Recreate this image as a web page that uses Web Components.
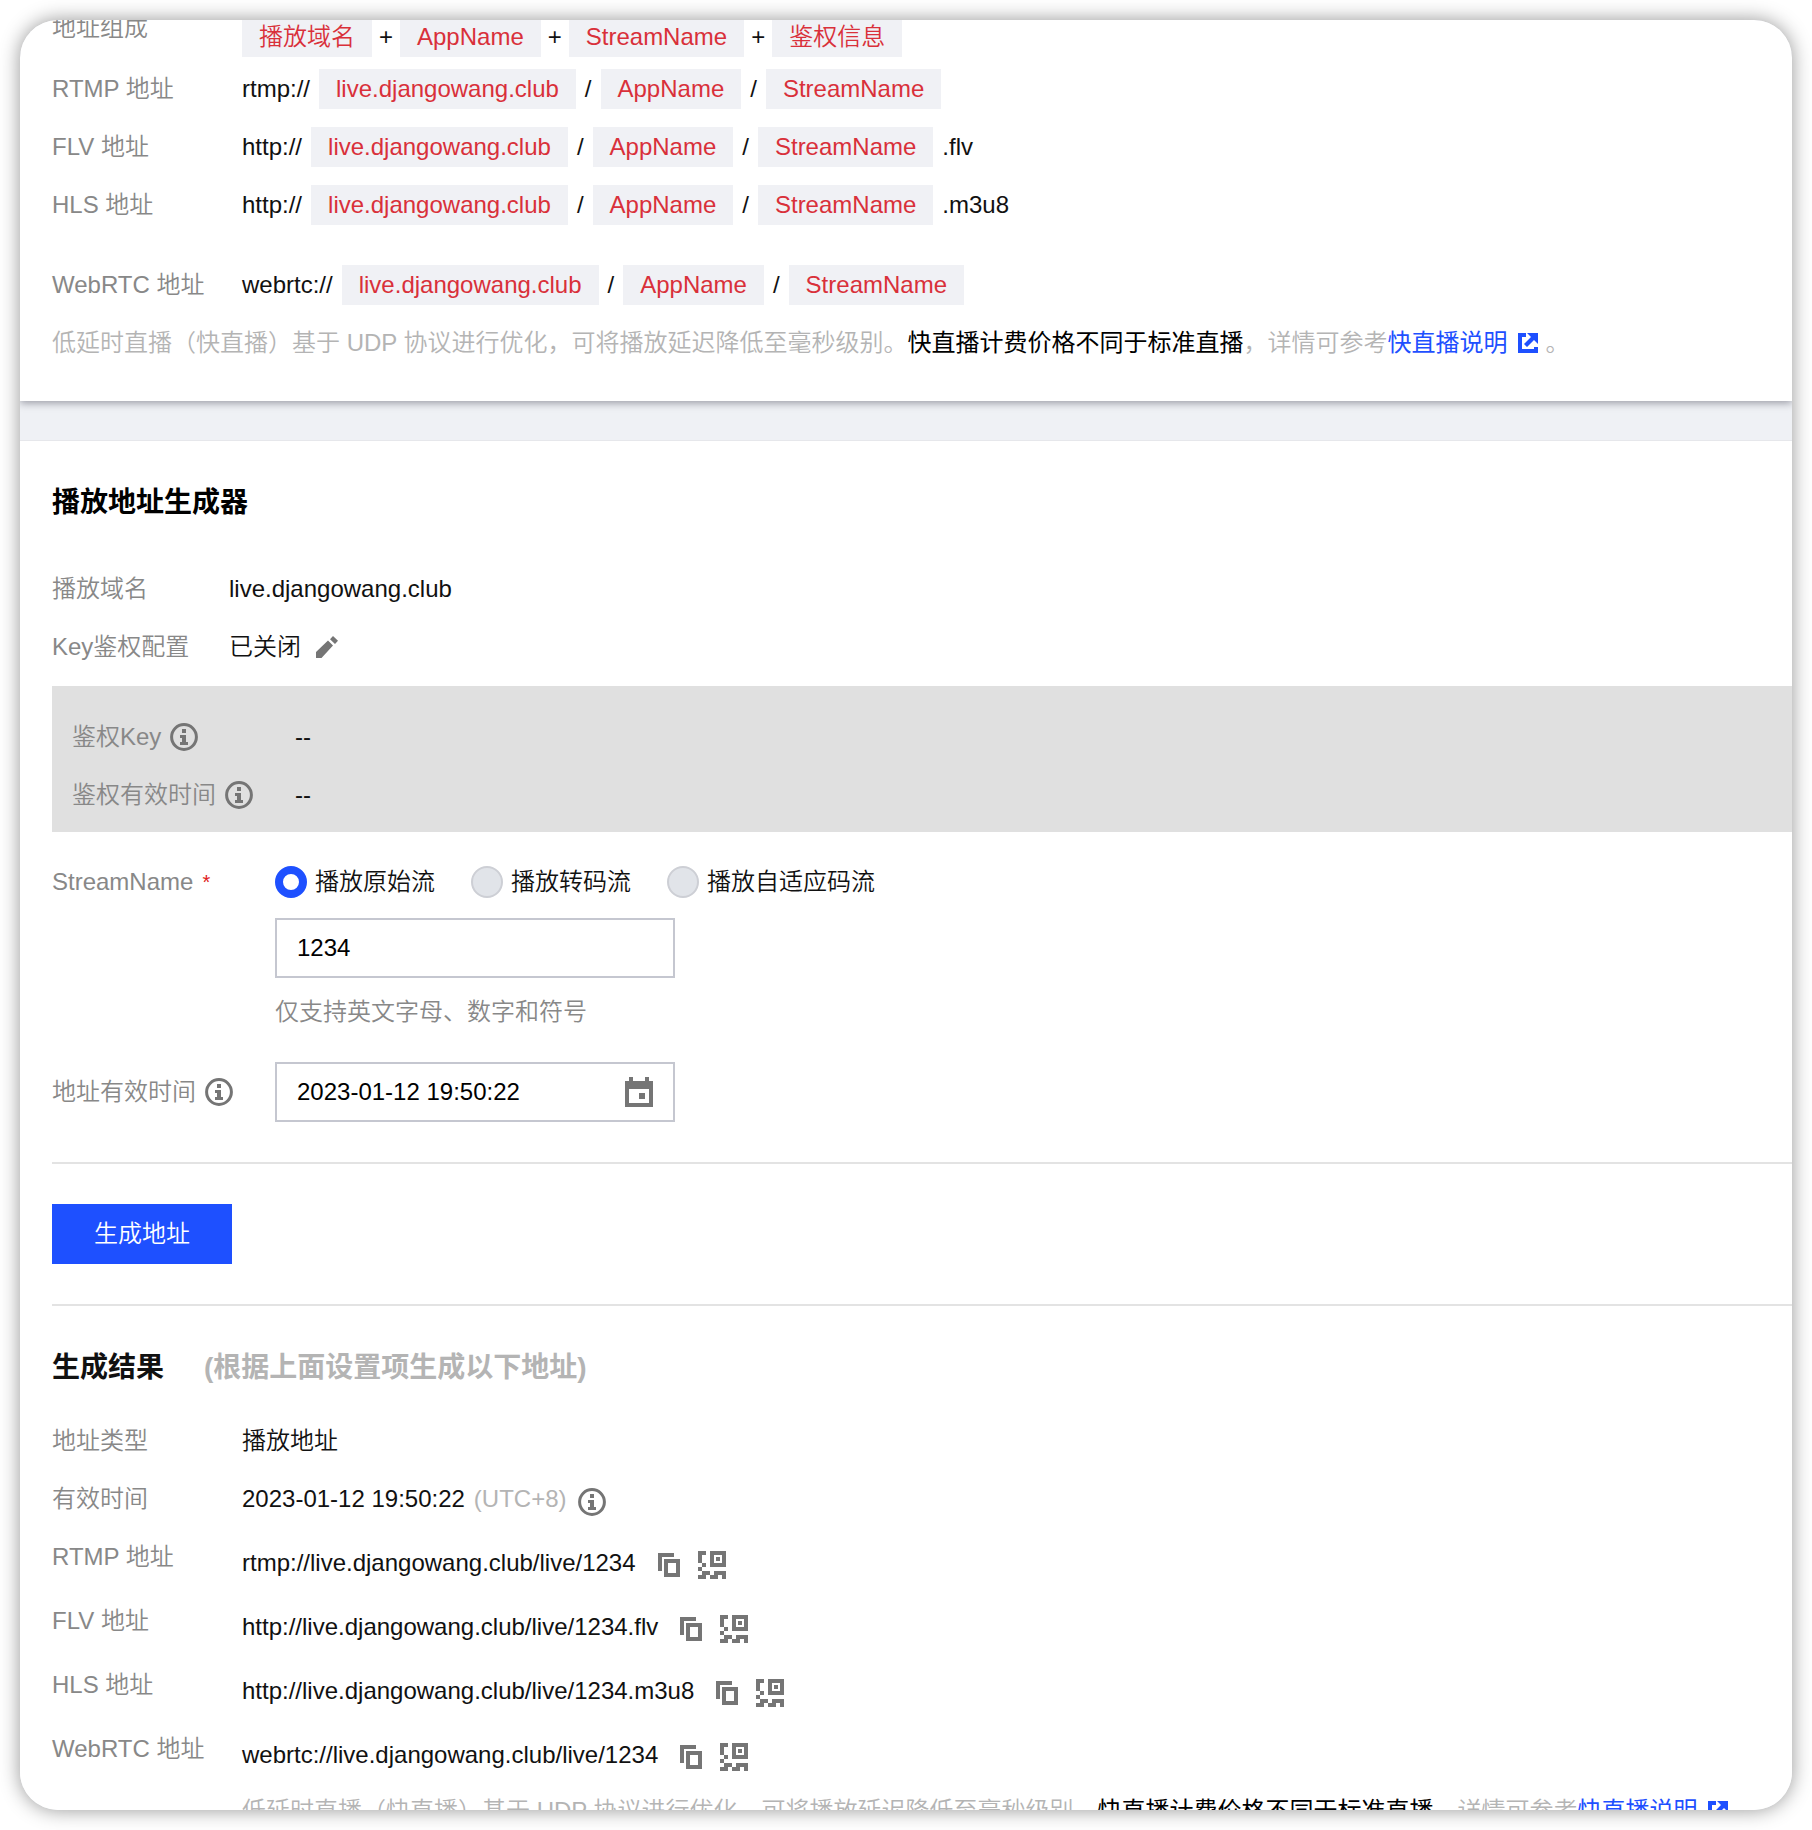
<!DOCTYPE html>
<html lang="zh-CN">
<head>
<meta charset="utf-8">
<title>播放地址生成器</title>
<style>
    :root {
        --ui-color-text: #111;
        --ui-color-label: #888;
        --ui-color-weak: #b4b4b4;
        --ui-color-brand: #1e50ff;
        --ui-color-danger: #d9303a;
        --ui-color-border: #c5c7d0;
        --ui-color-line: #e3e3e3;
        --ui-color-icon: #757575;
        --ui-font: "Liberation Sans", "Noto Sans CJK SC", sans-serif;
    }

    body {
        margin: 0;
        background: #fff;
        color: var(--ui-color-text);
        font: 350 24px/40px var(--ui-font);
    }

    .tag-list { --label-width: 190px; }
    .result { --label-width: 190px; }
    .generator { --label-width: 177px; }
    .auth-box { --label-width: 223px; }

    .first { margin-top: -12px; }
    .tight { margin-top: 12px; }
    .apart { margin-top: 40px; }
    .weak { color: var(--ui-color-weak); }
</style>
</head>
<body>

<app-window>
    <page-panel raised class="tag-list">
        <field-row class="first" label="地址组成" offset dense>
            <url-chip>播放域名</url-chip><span>+</span><url-chip>AppName</url-chip><span>+</span><url-chip>StreamName</url-chip><span>+</span><url-chip>鉴权信息</url-chip>
        </field-row>
        <field-row class="tight" label="RTMP 地址">
            <span>rtmp://</span><url-chip>live.djangowang.club</url-chip><span>/</span><url-chip>AppName</url-chip><span>/</span><url-chip>StreamName</url-chip>
        </field-row>
        <field-row label="FLV 地址">
            <span>http://</span><url-chip>live.djangowang.club</url-chip><span>/</span><url-chip>AppName</url-chip><span>/</span><url-chip>StreamName</url-chip><span>.flv</span>
        </field-row>
        <field-row label="HLS 地址">
            <span>http://</span><url-chip>live.djangowang.club</url-chip><span>/</span><url-chip>AppName</url-chip><span>/</span><url-chip>StreamName</url-chip><span>.m3u8</span>
        </field-row>
        <field-row class="apart" label="WebRTC 地址">
            <span>webrtc://</span><url-chip>live.djangowang.club</url-chip><span>/</span><url-chip>AppName</url-chip><span>/</span><url-chip>StreamName</url-chip>
        </field-row>
        <live-note></live-note>
    </page-panel>

    <page-panel class="generator">
        <panel-title>播放地址生成器</panel-title>
        <field-row label="播放域名"><span>live.djangowang.club</span></field-row>
        <field-row label="Key鉴权配置"><span>已关闭</span><icon-button icon="pencil" label="编辑"></icon-button></field-row>
        <auth-box class="auth-box">
            <field-row label="鉴权Key" info><span>--</span></field-row>
            <field-row label="鉴权有效时间" info><span>--</span></field-row>
        </auth-box>
        <stream-field></stream-field>
        <time-field></time-field>
        <action-bar>生成地址</action-bar>
        <div class="result">
            <panel-title small>生成结果<span slot="note">(根据上面设置项生成以下地址)</span></panel-title>
            <field-row label="地址类型"><span>播放地址</span></field-row>
            <field-row label="有效时间"><span>2023-01-12 19:50:22</span><span class="weak">(UTC+8)</span><svg-icon name="info" low></svg-icon></field-row>
            <result-row label="RTMP 地址">rtmp://live.djangowang.club/live/1234</result-row>
            <result-row label="FLV 地址">http://live.djangowang.club/live/1234.flv</result-row>
            <result-row label="HLS 地址">http://live.djangowang.club/live/1234.m3u8</result-row>
            <result-row label="WebRTC 地址">webrtc://live.djangowang.club/live/1234</result-row>
            <live-note indent></live-note>
        </div>
    </page-panel>
</app-window>

<script>
const icons = {
    info: [28, 28, '<circle cx="14" cy="14" r="12.4" fill="none" stroke="currentColor" stroke-width="3"/><path d="M12 6h4v4h-4zM10 12h6v7h2v3h-8v-3h2v-4h-2z"/>'],
    pencil: [22, 22, '<path d="M0 22v-6L12 4.500l5 5L5.500 22zM17 0l5 4.700-3 3.300-5-4.700z"/>'],
    calendar: [28, 30, '<path fill-rule="evenodd" d="M4 0h4v4h12V0h4v4h4v26H0V4h4zM4 12v14h20V12z"/><path d="M14 16h6v6h-6z"/>'],
    copy: [22, 24, '<path d="M0 0h16v4H4v14H0z"/><path fill-rule="evenodd" d="M6 6h16v18H6zM10 10v10h8V10z"/>'],
    qrcode: [28, 28, '<path d="M0 0h8v4H4v8H0zM4 12h4v4H4zM0 16h4v4H0z"/><path fill-rule="evenodd" d="M12 0h16v16H12zM16 4v8h8V4z"/><path d="M18 6h4v4h-4zM4 20h8v4H8v4H0v-4h4zM16 20h12v8h-4v-4h-4v4h-8v-4h4z"/>'],
    external: [20, 20, '<path d="M0 0h8v4H4v12h12v-2h4v6H0z"/><path d="M9 0h11v11l-4-4-7 7-3-3 7-7z"/>']
};

// every element clones one template into an open root
function render(el, html) {
    const template = document.createElement('template');
    template.innerHTML = html;
    el.attachShadow({ mode: 'open' });
    el.shadowRoot.appendChild(template.content.cloneNode(true));
}

const rowStyle = `
    :host { display: block; margin-top: 18px; }
    .row { display: flex; align-items: flex-start; }
    .label {
        display: flex;
        align-items: center;
        gap: 9px;
        flex: none;
        width: var(--label-width);
        color: var(--ui-color-label);
        white-space: nowrap;
    }
`;

const inputStyle = `
    input[type=text] {
        box-sizing: border-box;
        width: 400px;
        height: 60px;
        padding: 0 20px;
        border: 2px solid var(--ui-color-border);
        border-radius: 0;
        background: #fff;
        color: #000;
        font: inherit;
        outline: none;
    }
`;

class SvgIcon extends HTMLElement {
    constructor() {
        super();
        const [w, h, body] = icons[this.getAttribute('name')];
        render(this, `
        <style>
            :host { display: inline-flex; flex: none; color: var(--ui-color-icon); }
            :host([low]) { margin-top: 6px; margin-left: 2px; }
            :host([name=external]) { color: inherit; }
        </style>
        <svg width="${w}" height="${h}" viewBox="0 0 ${w} ${h}" fill="currentColor" aria-hidden="true">${body}</svg>
        `);
    }
}
window.customElements.define('svg-icon', SvgIcon);

class IconButton extends HTMLElement {
    constructor() {
        super();
        render(this, `
        <style>
            :host { display: inline-flex; flex: none; margin-left: 6px; }
            button { display: flex; padding: 0; border: 0; background: none; cursor: pointer; }
        </style>
        <button type="button" aria-label="${this.getAttribute('label')}"><svg-icon name="${this.getAttribute('icon')}"></svg-icon></button>
        `);
    }
}
window.customElements.define('icon-button', IconButton);

class AppWindow extends HTMLElement {
    constructor() {
        super();
        render(this, `
        <style>
            :host { display: block; box-sizing: border-box; height: 100vh; padding: 20px; overflow: hidden; }
            .frame {
                height: 100%;
                overflow: hidden;
                border-radius: 38px;
                background: #eff1f5;
                box-shadow: 0 0 20px rgba(0, 0, 0, .42);
            }
        </style>
        <div class="frame"><slot></slot></div>
        `);
    }
}
window.customElements.define('app-window', AppWindow);

class PagePanel extends HTMLElement {
    constructor() {
        super();
        render(this, `
        <style>
            :host { display: flow-root; padding: 42px 0 0 32px; border-top: 1px solid #e6e7eb; background: #fff; }
            :host([raised]) {
                margin-bottom: 39px;
                padding: 0 0 38px 32px;
                border: 0;
                box-shadow: 0 2px 8px rgba(20, 20, 40, .4);
            }
        </style>
        <slot></slot>
        `);
    }
}
window.customElements.define('page-panel', PagePanel);

class PanelTitle extends HTMLElement {
    constructor() {
        super();
        render(this, `
        <style>
            :host { display: block; margin-bottom: 46px; color: #000; }
            :host([small]) { margin-bottom: 33px; color: var(--ui-color-text); }
            h2 { display: flex; gap: 40px; margin: 0; font-size: 28px; font-weight: bold; }
            ::slotted(span) { color: var(--ui-color-weak); }
        </style>
        <h2><span><slot></slot></span><slot name="note"></slot></h2>
        `);
    }
}
window.customElements.define('panel-title', PanelTitle);

class FieldRow extends HTMLElement {
    constructor() {
        super();
        const info = this.hasAttribute('info') ? '<svg-icon name="info"></svg-icon>' : '';
        render(this, `
        <style>
            ${rowStyle}
            .value { display: flex; align-items: center; gap: 9px; min-height: 40px; white-space: nowrap; }
            :host([dense]) .value { gap: 7px; }
            :host([offset]) .value { margin-top: 9px; }
        </style>
        <div class="row">
            <span class="label">${this.getAttribute('label')}${info}</span>
            <div class="value"><slot></slot></div>
        </div>
        `);
    }
}
window.customElements.define('field-row', FieldRow);

class UrlChip extends HTMLElement {
    constructor() {
        super();
        render(this, `
        <style>
            :host { display: block; padding: 0 17px; background: #f0f1f5; color: var(--ui-color-danger); }
        </style>
        <slot></slot>
        `);
    }
}
window.customElements.define('url-chip', UrlChip);

class LiveNote extends HTMLElement {
    constructor() {
        super();
        render(this, `
        <style>
            :host { display: block; margin-top: 18px; color: var(--ui-color-weak); white-space: nowrap; }
            :host([indent]) { margin-top: 16px; margin-left: var(--label-width); }
            p { margin: 0; }
            em { color: #000; font-style: normal; font-weight: 400; }
            a { color: var(--ui-color-brand); font-weight: 400; text-decoration: none; }
            svg-icon { margin: 0 8px 0 10px; vertical-align: -2px; }
        </style>
        <p>低延时直播（快直播）基于 UDP 协议进行优化，可将播放延迟降低至毫秒级别。<em>快直播计费价格不同于标准直播</em>，详情可参考<a href="#">快直播说明<svg-icon name="external"></svg-icon></a>。</p>
        `);
    }
}
window.customElements.define('live-note', LiveNote);

class AuthBox extends HTMLElement {
    constructor() {
        super();
        render(this, `
        <style>
            :host { display: flow-root; margin-top: 19px; padding: 13px 0 17px 20px; background: #e0e0e0; }
        </style>
        <slot></slot>
        `);
    }
}
window.customElements.define('auth-box', AuthBox);

class StreamField extends HTMLElement {
    constructor() {
        super();
        const radios = ['播放原始流', '播放转码流', '播放自适应码流'].map((text, i) => `
            <label><input type="radio" name="stream" ${i === 0 ? 'checked' : ''}>${text}</label>`).join('');
        render(this, `
        <style>
            ${rowStyle}
            ${inputStyle}
            :host { --label-width: 223px; margin-top: 30px; }
            .star { color: #e02020; font-size: 20px; }
            .radios { display: flex; gap: 36px; margin-bottom: 16px; }
            .radios label { display: flex; align-items: center; gap: 8px; }
            input[type=radio] {
                appearance: none;
                box-sizing: border-box;
                width: 32px;
                height: 32px;
                margin: 0;
                border: 2px solid #cdcfd5;
                border-radius: 50%;
                background: #e1e4e9;
            }
            input[type=radio]:checked { border: 8px solid var(--ui-color-brand); background: #fff; }
            input[type=text] { display: block; }
            .hint { margin: 14px 0 0; color: var(--ui-color-label); }
        </style>
        <div class="row">
            <label class="label" for="stream">StreamName<span class="star">*</span></label>
            <div>
                <div class="radios">${radios}</div>
                <input type="text" id="stream" value="1234">
                <p class="hint">仅支持英文字母、数字和符号</p>
            </div>
        </div>
        `);
    }
}
window.customElements.define('stream-field', StreamField);

class TimeField extends HTMLElement {
    constructor() {
        super();
        render(this, `
        <style>
            ${rowStyle}
            ${inputStyle}
            :host { --label-width: 223px; margin-top: 30px; }
            .row { align-items: center; }
            .picker { display: grid; align-items: center; }
            .picker > * { grid-area: 1 / 1; }
            .picker svg-icon { justify-self: end; margin-right: 22px; }
        </style>
        <div class="row">
            <label class="label" for="time">地址有效时间<svg-icon name="info"></svg-icon></label>
            <div class="picker">
                <input type="text" id="time" value="2023-01-12 19:50:22">
                <svg-icon name="calendar"></svg-icon>
            </div>
        </div>
        `);
    }
}
window.customElements.define('time-field', TimeField);

class ActionBar extends HTMLElement {
    constructor() {
        super();
        render(this, `
        <style>
            :host {
                display: block;
                margin: 40px 0 42px;
                padding: 40px 0;
                border: solid var(--ui-color-line);
                border-width: 2px 0;
            }
            button {
                display: block;
                padding: 10px 42px;
                border: 0;
                background: var(--ui-color-brand);
                color: #fff;
                font: inherit;
                cursor: pointer;
            }
        </style>
        <button type="button"><slot></slot></button>
        `);
    }
}
window.customElements.define('action-bar', ActionBar);

class ResultRow extends HTMLElement {
    constructor() {
        super();
        render(this, `
        <style>
            ${rowStyle}
            .value { display: flex; align-items: center; padding-top: 6px; white-space: nowrap; }
            .tools { display: flex; align-items: center; gap: 12px; margin: 4px 0 0 16px; }
        </style>
        <div class="row">
            <span class="label">${this.getAttribute('label')}</span>
            <div class="value">
                <span><slot></slot></span>
                <span class="tools">
                    <icon-button icon="copy" label="复制"></icon-button>
                    <icon-button icon="qrcode" label="二维码"></icon-button>
                </span>
            </div>
        </div>
        `);
    }
}
window.customElements.define('result-row', ResultRow);
</script>
</body>
</html>
